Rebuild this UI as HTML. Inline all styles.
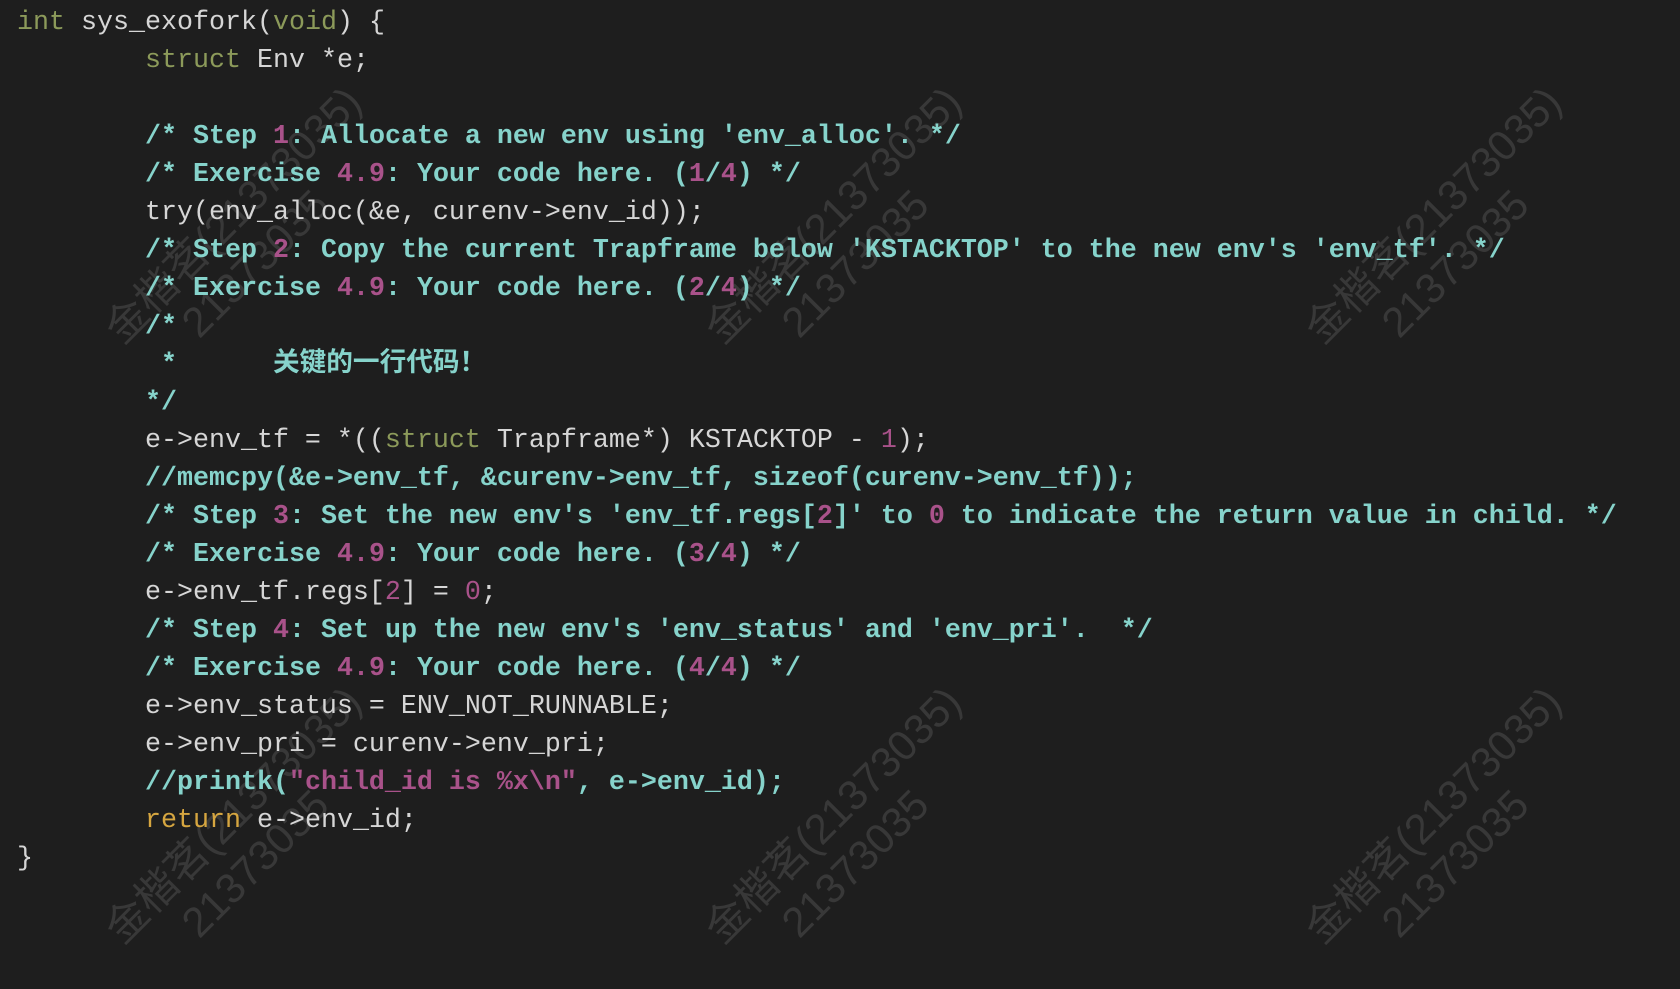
<!DOCTYPE html>
<html><head><meta charset="utf-8"><style>
body{margin:0;background:#1e1e1e;width:1680px;height:910px;overflow:hidden;position:relative}
pre{margin:0;position:absolute;left:17px;top:4px;font-family:"Liberation Mono","Noto Sans CJK SC",monospace;font-size:26.67px;line-height:38px;color:#d6d6d6;z-index:2}
.k{color:#8c9a5a}.c{color:#86d3cb;font-weight:bold}.n{color:#a9528a}.r{color:#d6a640}.s{color:#a9528a}
.wm{position:absolute;color:#383838;font-family:"Liberation Sans","Noto Sans CJK SC",sans-serif;font-size:42px;transform:rotate(-45deg);transform-origin:left top;white-space:nowrap;line-height:50px;z-index:1}
</style></head><body>
<div class="wm" style="left:95px;top:318px">金楷茗(21373035)<br>&nbsp;&nbsp;&nbsp;&nbsp;&nbsp;21373035</div>
<div class="wm" style="left:695px;top:318px">金楷茗(21373035)<br>&nbsp;&nbsp;&nbsp;&nbsp;&nbsp;21373035</div>
<div class="wm" style="left:1295px;top:318px">金楷茗(21373035)<br>&nbsp;&nbsp;&nbsp;&nbsp;&nbsp;21373035</div>
<div class="wm" style="left:95px;top:918px">金楷茗(21373035)<br>&nbsp;&nbsp;&nbsp;&nbsp;&nbsp;21373035</div>
<div class="wm" style="left:695px;top:918px">金楷茗(21373035)<br>&nbsp;&nbsp;&nbsp;&nbsp;&nbsp;21373035</div>
<div class="wm" style="left:1295px;top:918px">金楷茗(21373035)<br>&nbsp;&nbsp;&nbsp;&nbsp;&nbsp;21373035</div>
<pre><span class="k">int</span> sys_exofork(<span class="k">void</span>) {
        <span class="k">struct</span> Env *e;

        <span class="c">/* Step <span class="n">1</span>: Allocate a new env using 'env_alloc'. */</span>
        <span class="c">/* Exercise <span class="n">4.9</span>: Your code here. (<span class="n">1</span>/<span class="n">4</span>) */</span>
        try(env_alloc(&amp;e, curenv-&gt;env_id));
        <span class="c">/* Step <span class="n">2</span>: Copy the current Trapframe below 'KSTACKTOP' to the new env's 'env_tf'. */</span>
        <span class="c">/* Exercise <span class="n">4.9</span>: Your code here. (<span class="n">2</span>/<span class="n">4</span>) */</span>
        <span class="c">/*</span>
<span class="c">         *      关键的一行代码！</span>
<span class="c">        */</span>
        e-&gt;env_tf = *((<span class="k">struct</span> Trapframe*) KSTACKTOP - <span class="n">1</span>);
        <span class="c">//memcpy(&amp;e-&gt;env_tf, &amp;curenv-&gt;env_tf, sizeof(curenv-&gt;env_tf));</span>
        <span class="c">/* Step <span class="n">3</span>: Set the new env's 'env_tf.regs[<span class="n">2</span>]' to <span class="n">0</span> to indicate the return value in child. */</span>
        <span class="c">/* Exercise <span class="n">4.9</span>: Your code here. (<span class="n">3</span>/<span class="n">4</span>) */</span>
        e-&gt;env_tf.regs[<span class="n">2</span>] = <span class="n">0</span>;
        <span class="c">/* Step <span class="n">4</span>: Set up the new env's 'env_status' and 'env_pri'.  */</span>
        <span class="c">/* Exercise <span class="n">4.9</span>: Your code here. (<span class="n">4</span>/<span class="n">4</span>) */</span>
        e-&gt;env_status = ENV_NOT_RUNNABLE;
        e-&gt;env_pri = curenv-&gt;env_pri;
        <span class="c">//printk(<span class="s">"child_id is %x\n"</span>, e-&gt;env_id);</span>
        <span class="r">return</span> e-&gt;env_id;
}</pre>
</body></html>
